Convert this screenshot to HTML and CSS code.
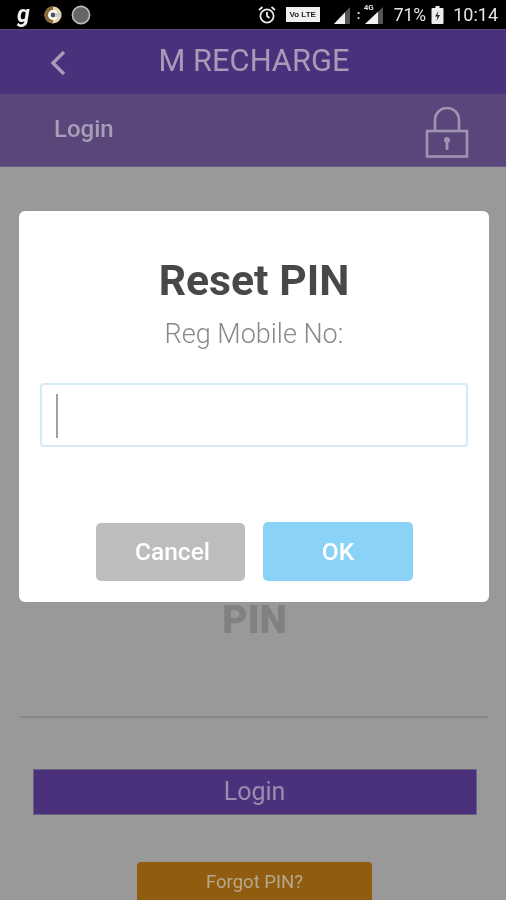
FILE: index.html
```html
<!DOCTYPE html>
<html lang="en">
<head>
<meta charset="utf-8">
<title>M Recharge</title>
<link rel="stylesheet" href="styles.css">
</head>
<body>
<div class="screen">
  <div class="status">
    <div class="status-left">
      <span class="g-icon">g</span>
      <svg class="notif" width="22" height="22" viewBox="0 0 22 22"><circle cx="10" cy="11" r="8.5" fill="#e8d8b0"/><path d="M10 2.5a8.5 8.5 0 0 0 0 17z" fill="#8a6a3a"/><circle cx="10" cy="11" r="5" fill="#fff"/><circle cx="10" cy="11" r="2.4" fill="#555"/><path d="M12 9h7l-3 2 3 2h-7z" fill="#ccc"/></svg>
      <svg class="notif" width="20" height="20" viewBox="0 0 20 20"><circle cx="10" cy="10" r="8.6" fill="#666" stroke="#bbb" stroke-width="1.6"/></svg>
    </div>
    <div class="status-right">
      <svg width="20" height="20" viewBox="0 0 20 20" fill="none" stroke="#e8e8e8" stroke-width="1.8"><circle cx="10" cy="11" r="6.6"/><path d="M10 7v4l2.5 2M2 5l3.5-3M18 5l-3.5-3"/></svg>
      <span class="volte">Vo LTE</span>
      <svg class="sig1" width="16" height="18" viewBox="0 0 16 18"><path d="M0 18 16 1v17z" fill="#555"/><path d="M0 18 11 6.300v11.700z" fill="#f2f2f2"/></svg>
      <span class="dots">:</span>
      <span class="sig2"><span class="net">4G</span>
      <svg width="18" height="18" viewBox="0 0 18 18"><path d="M0 18 18 1v17z" fill="#555"/><path d="M0 18 13 5.700v12.300z" fill="#f2f2f2"/></svg></span>
      <span class="pct">71%</span>
      <svg class="batt" width="13" height="18" viewBox="0 0 12 18"><path d="M4 0h4v2h3a1 1 0 0 1 1 1v14a1 1 0 0 1-1 1H1a1 1 0 0 1-1-1V3a1 1 0 0 1 1-1h3z" fill="#ededed"/><path d="M7 5 3.500 10.500H6L5 15l3.500-6H6z" fill="#222"/></svg>
      <span class="time">10:14</span>
    </div>
  </div>

  <header class="appbar">
    <svg class="back" width="18" height="26" viewBox="0 0 18 26" fill="none" stroke="#a79bb8" stroke-width="3.400"><path d="M15 2 4 13l11 11"/></svg>
    <h1 class="appbar-title">M RECHARGE</h1>
  </header>

  <div class="subbar">
    <span class="subbar-title">Login</span>
    <svg class="lock" width="44" height="52" viewBox="0 0 44 52" fill="none" stroke="#a093b2" stroke-width="2.600"><path d="M10 23V13a12 12 0 0 1 24 0v10"/><rect x="2" y="24" width="40" height="25.500"/><circle cx="22" cy="33" r="3" fill="#a093b2" stroke="none"/><path d="M22 34v9" stroke-width="2.800"/></svg>
  </div>

  <main class="content">
    <div class="pin-label">PIN</div>
    <div class="divider"></div>
    <button class="login-btn">Login</button>
    <button class="forgot-btn">Forgot PIN?</button>
  </main>

  <section class="modal">
    <h2 class="modal-title">Reset PIN</h2>
    <p class="modal-label">Reg Mobile No:</p>
    <div class="field"><span class="caret"></span></div>
    <div class="actions">
      <button class="action cancel">Cancel</button>
      <button class="action ok">OK</button>
    </div>
  </section>
</div>
</body>
</html>
```

FILE: styles.css
```css
* { box-sizing: border-box; }
html, body { margin: 0; padding: 0; }
body { width: 506px; height: 900px; overflow: hidden; background: #999; font-family: Roboto, "Liberation Sans", sans-serif; }
.screen { position: relative; width: 506px; height: 900px; overflow: hidden; background: #999; display: flex; flex-direction: column; filter: blur(0.45px); }

.status { height: 29px; flex: none; background: #000; display: flex; justify-content: space-between; align-items: center; padding: 0 8px 0 17px; }
.status-left { display: flex; align-items: center; gap: 14px; }
.g-icon { color: #f2f2f2; font: italic 700 23px/26px Roboto, sans-serif; width: 12px; height: 26px; }
.notif { display: block; }
.notif + .notif { margin-left: -8px; }
.status-right { display: flex; align-items: center; color: #e4e4e4; }
.volte { width: 34px; height: 15px; margin-left: 9px; background: #f0f0f0; color: #222; font: 700 8px/15px "Liberation Sans", sans-serif; text-align: center; white-space: nowrap; }
.sig1 { margin-left: 14px; }
.dots { width: 10px; margin-left: 4px; font: 700 13px/13px Roboto, sans-serif; text-align: center; }
.sig2 { position: relative; display: block; height: 18px; margin-left: 1px; }
.sig2 svg { display: block; }
.net { position: absolute; left: -1px; top: -3px; font: 700 8px/9px Roboto, sans-serif; color: #ddd; }
.pct { margin-left: 11px; font: 400 17.500px/20px Roboto, sans-serif; }
.batt { margin-left: 5px; }
.time { margin-left: 9px; font: 400 18px/20px Roboto, sans-serif; }

.appbar { height: 65px; flex: none; background: #4b317b; display: flex; align-items: center; justify-content: center; position: relative; border-top: 1px solid #5a4580; }
.back { position: absolute; left: 49px; top: 20px; }
.appbar-title { margin: 0; color: #a79bb8; font: 400 30.800px/34px Roboto, sans-serif; padding: 0 0 3px 2px; }

.subbar { height: 73px; flex: none; background: #5a467b; display: flex; align-items: center; justify-content: space-between; padding: 0 37px 0 54px; border-bottom: 1px solid #6a5b85; }
.subbar-title { color: #a89db6; font: 500 24px/28px Roboto, sans-serif; margin-top: -2px; }
.lock { display: block; margin-top: 5px; }

.content { flex: 1; display: flex; flex-direction: column; align-items: center; padding: 433px 0 0 3px; }
.pin-label { color: #818181; font: 900 38.900px/40px Roboto, sans-serif; height: 40px; }
.divider { width: 468px; height: 2px; background: #878787; margin: 76px 0 0 -2px; }
.login-btn { width: 444px; height: 46px; margin-top: 51px; flex: none; border: 1px solid #6a6480; background: #4b317b; color: #9a8db0; font: 400 25px/30px Roboto, sans-serif; padding: 0; }
.forgot-btn { width: 235px; height: 60px; margin-top: 47px; flex: none; border: 0; border-radius: 4px 4px 0 0; background: #905c10; color: #b8a98c; font: 400 18.500px/20px Roboto, sans-serif; padding: 0 0 20px; }

.modal { position: absolute; left: 19px; top: 211px; width: 470px; height: 391px; background: #fff; border-radius: 6px; display: flex; flex-direction: column; align-items: center; padding: 45px 21px 0; }
.modal-title { margin: 0; color: #484848; font: 700 42.700px/48px Roboto, sans-serif; }
.modal-label { margin: 14px 0 0; color: #8a8a8a; font: 300 27px/32px Roboto, sans-serif; }
.field { width: 428px; height: 64px; margin-top: 33px; flex: none; border: 2px solid #d4ebf6; border-radius: 4px; padding: 9px 0 0 14px; }
.caret { display: block; width: 2px; height: 44px; background: #a0a0a0; }
.actions { display: flex; gap: 18px; margin: 75px 0 0 1px; align-items: center; }
.action { height: 59px; border: 0; border-radius: 5px; color: #fff; font: 500 24.500px/28px Roboto, sans-serif; padding: 0; }
.cancel { width: 149px; height: 58px; background: #bdbdbd; padding-left: 4px; }
.ok { width: 150px; background: #8bd3f6; }
```
